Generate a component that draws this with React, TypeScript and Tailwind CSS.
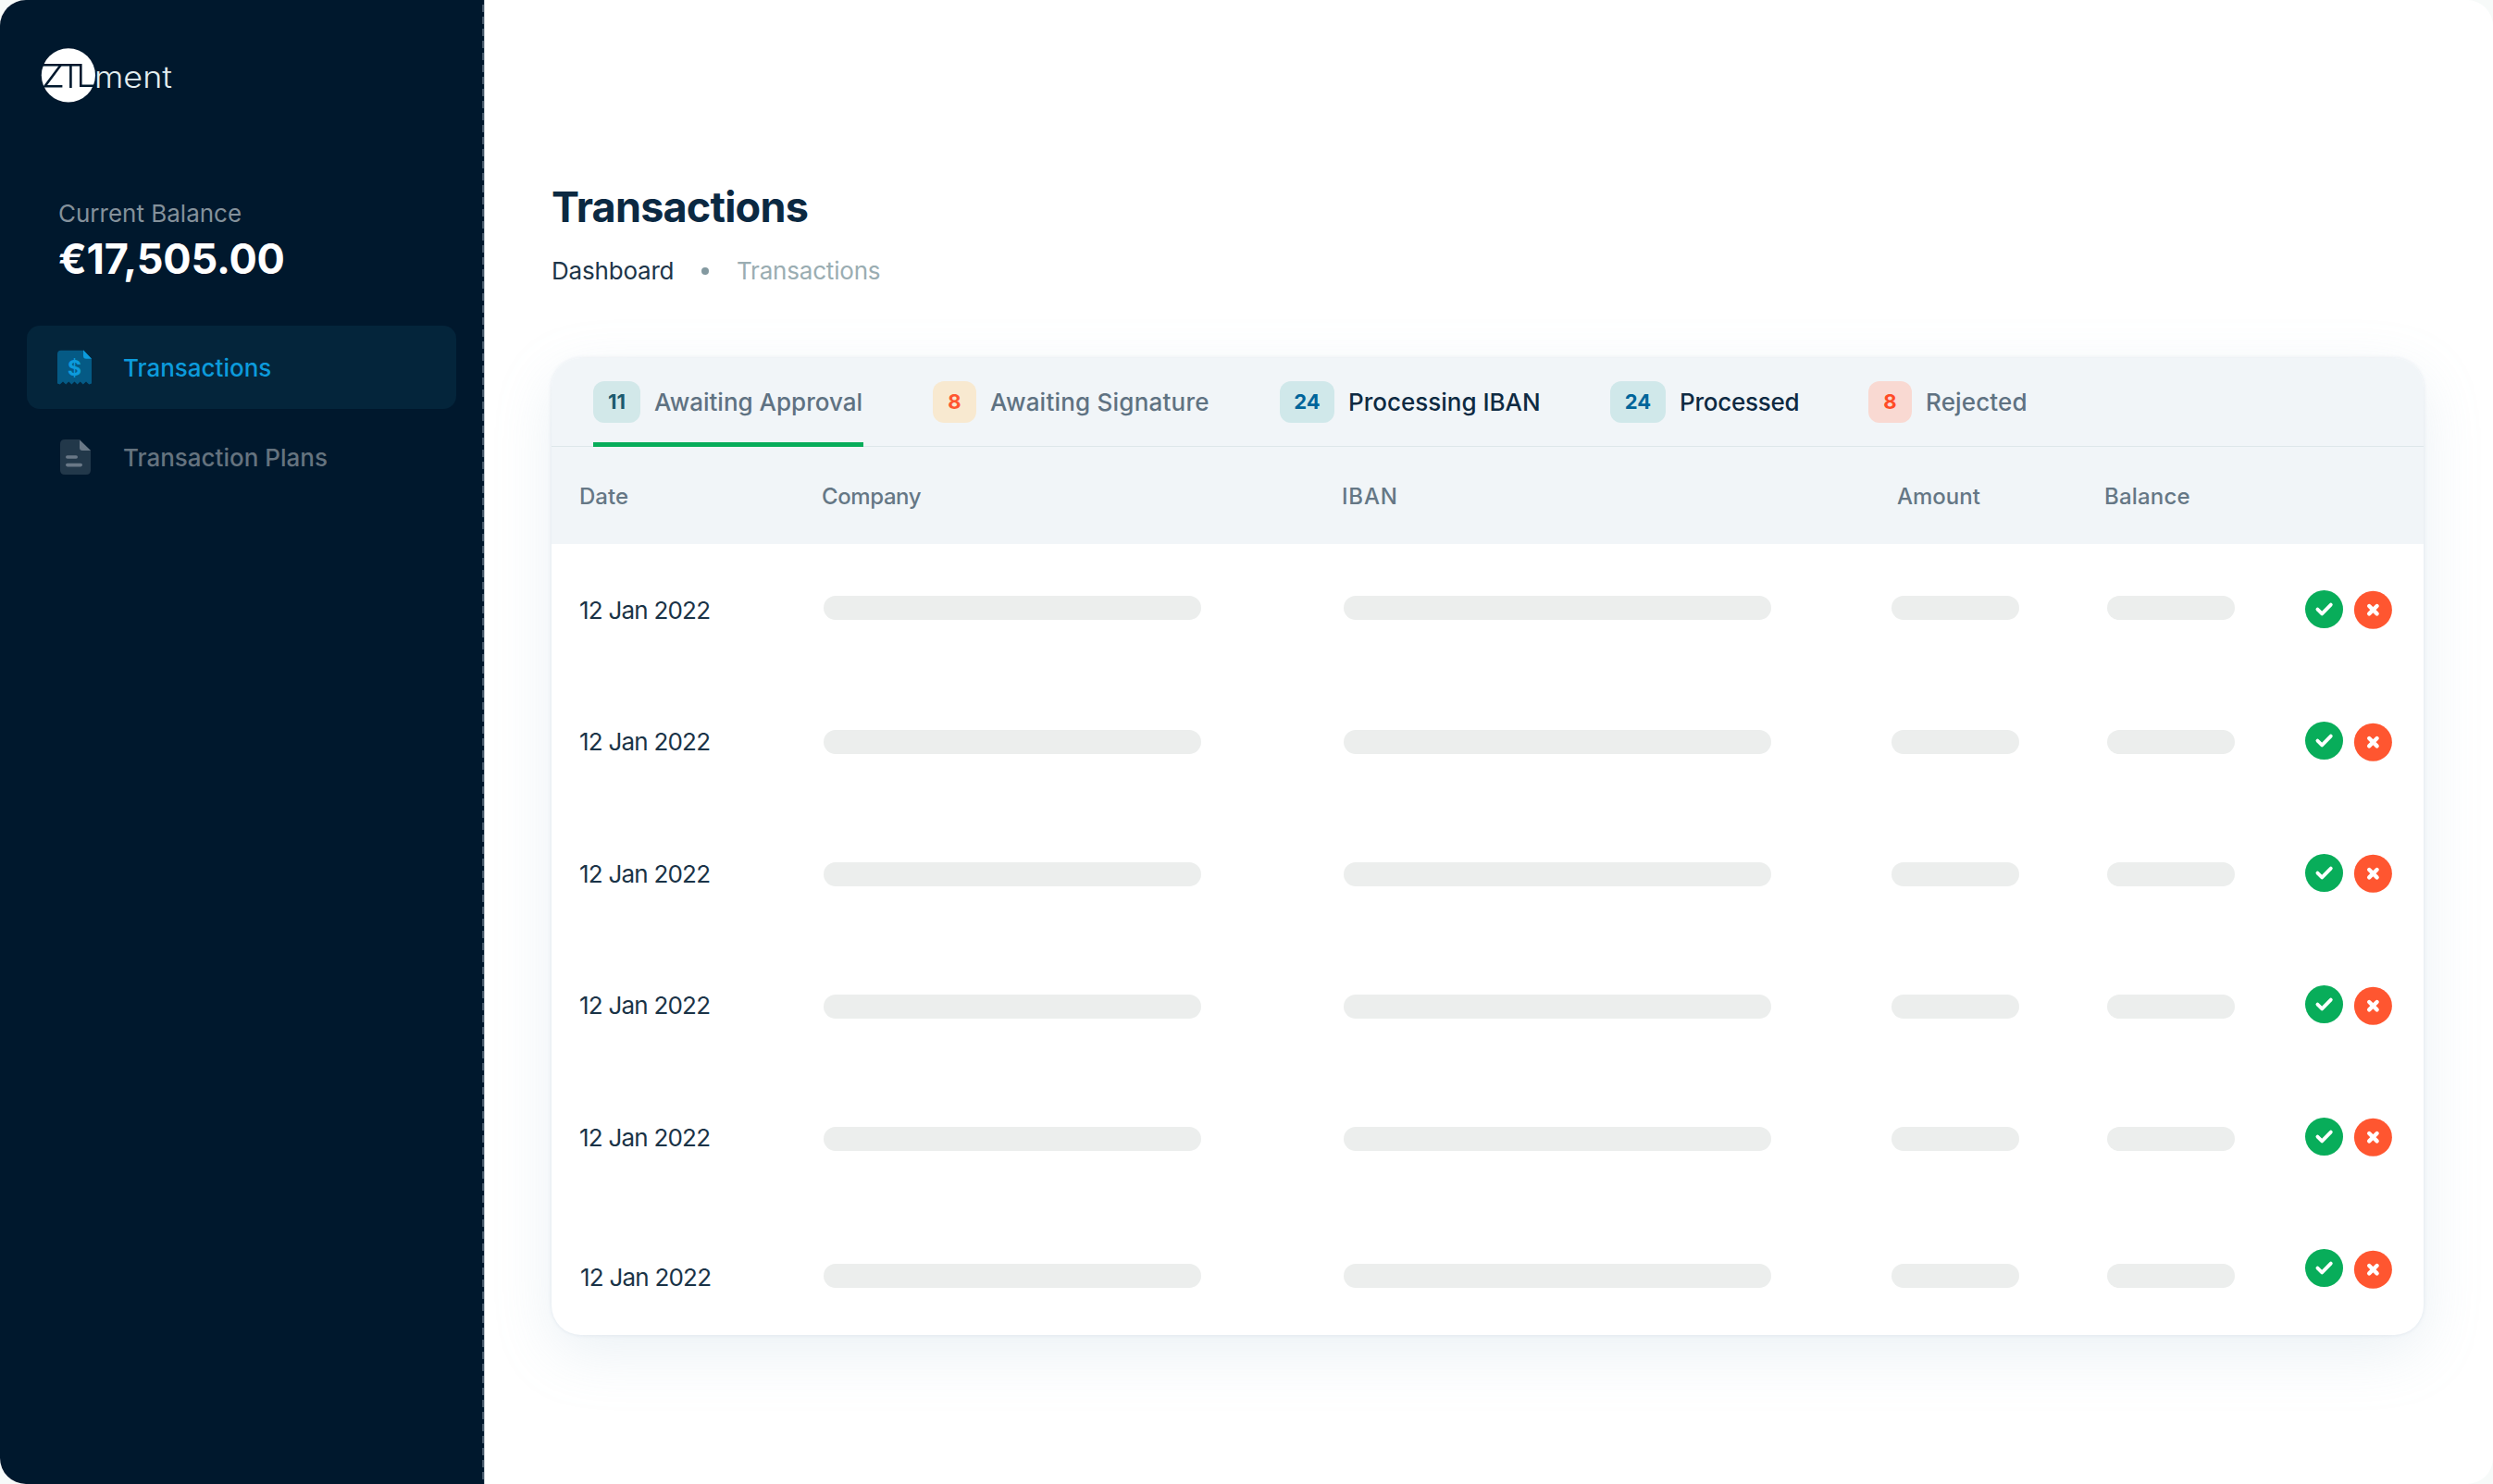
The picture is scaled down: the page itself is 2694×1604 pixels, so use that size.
import React from "react";
import clsx from "clsx";

const tabs = [
  {
    count: 11,
    label: "Awaiting Approval",
    width: "w-[292px]",
    badge: "w-[51px] bg-[#d2e8e9] text-[#1c5a6e]",
    text: "text-[#5f7282]",
    active: true,
  },
  {
    count: 8,
    label: "Awaiting Signature",
    width: "w-[300px]",
    badge: "w-[47px] bg-[#f8e9d0] text-[#ff5630]",
    text: "text-[#5f7282] tracking-[0.22px]",
  },
  {
    count: 24,
    label: "Processing IBAN",
    width: "w-[282px]",
    badge: "w-[59px] bg-[#d0e8ea] text-[#00659a]",
    text: "text-[#0e2a42]",
  },
  {
    count: 24,
    label: "Processed",
    width: "w-[204px]",
    badge: "w-[60px] bg-[#d0e8ea] text-[#00659a]",
    text: "text-[#0e2a42] tracking-[-0.25px]",
  },
  {
    count: 8,
    label: "Rejected",
    width: "w-[180px]",
    badge: "w-[47px] bg-[#f9d9d2] text-[#ff4b26]",
    text: "text-[#5f7282] tracking-[0.15px]",
  },
];

const rows = [
  { date: "12 Jan 2022", dateClass: "", barClass: "pb-[5px]" },
  { date: "12 Jan 2022", dateClass: "", barClass: "" },
  { date: "12 Jan 2022", dateClass: "", barClass: "pt-px" },
  { date: "12 Jan 2022", dateClass: "", barClass: "pt-[2px]" },
  { date: "12 Jan 2022", dateClass: "", barClass: "pt-[3px]" },
  { date: "12 Jan 2022", dateClass: "pt-[18px] pl-px", barClass: "pt-[15px]" },
];

const columns = "grid grid-cols-[262px_562px_594px_229px_218px_1fr] pl-[30px]";

const Logo: React.FC = () => (
  <svg width="150" height="62" viewBox="0 0 150 62" className="ml-[40px]">
    <circle cx="33.9" cy="31.3" r="29.1" fill="#fff" />
    <g fill="none" stroke="#00182d" strokeWidth="2.6">
      <path d="M4 20.2H47.3V42.8H64" />
      <path d="M25.5 20.5L8.5 43.3H27.4" />
      <path d="M36.4 20V45" />
    </g>
    <text
      x="62"
      y="45.2"
      fontSize="32"
      fontWeight="300"
      textLength="84"
      lengthAdjust="spacingAndGlyphs"
      fill="#e3edf0"
      className="font-['Inter',sans-serif]"
    >
      ment
    </text>
  </svg>
);

const InvoiceIcon: React.FC = () => (
  <svg width="37" height="38" viewBox="0 0 37 38">
    <path
      d="M4 .7H28L37 9.7V36.6L34.2 37.5 31 34.6 27.8 37.5 24.7 34.6 21.6 37.5 18.5 34.6 15.4 37.5 12.3 34.6 9.2 37.5 6 34.6 2.8 37.5 0 36.6V4.7Q0 .7 4 .7Z"
      fill="#055a85"
    />
    <path d="M28 .2L37 9.7H31Q28 9.7 28 6.7Z" fill="#0c9bdc" />
    <text
      x="18.6"
      y="27.6"
      fontSize="23"
      fontWeight="700"
      textAnchor="middle"
      fill="#0c9bdc"
      className="font-['Inter',sans-serif]"
    >
      $
    </text>
  </svg>
);

const DocumentIcon: React.FC = () => (
  <svg width="37" height="38" viewBox="0 0 37 38">
    <path
      d="M8 0H24L36 12V33Q36 38 31 38H8Q3 38 3 33V5Q3 0 8 0Z"
      fill="#22384a"
    />
    <path d="M24 .5L36 12H27Q24 12 24 9Z" fill="#697887" />
    <rect x="9" y="17.2" width="13" height="3.6" rx="1.8" fill="#697887" />
    <rect x="9" y="25.8" width="18" height="3.6" rx="1.8" fill="#697887" />
  </svg>
);

const Sidebar: React.FC = () => (
  <aside className="flex w-[524px] shrink-0 bg-[#00182d]">
    <div className="flex-1 pt-[50px]">
      <Logo />
      <div className="mt-[103px] pl-[63px]">
        <p className="text-[26px] leading-8 text-[#84919b]">Current Balance</p>
        <p className="mt-[6px] text-[45px] leading-[54px] font-bold tracking-[-0.2px] text-white">
          €17,505.00
        </p>
      </div>
      <nav className="mt-[45px] ml-[29px] flex w-[464px] flex-col gap-[7px]">
        <div className="flex h-[90px] items-center gap-[34px] rounded-[14px] bg-[#04253b] pl-[33px] text-[26px] font-medium text-[#0c9bdc]">
          <InvoiceIcon />
          <p>Transactions</p>
        </div>
        <div className="flex h-[90px] items-center gap-[34px] rounded-[14px] pl-[33px] text-[26px] font-medium text-[#65737f]">
          <DocumentIcon />
          <p>Transaction Plans</p>
        </div>
      </nav>
    </div>
    <div className="w-[2px] bg-[repeating-linear-gradient(to_bottom,transparent_0_5px,#44586a_5px_13px)]" />
    <div className="w-px bg-[#c3cad0]" />
  </aside>
);

const Bar: React.FC<{ className: string }> = ({ className }) => (
  <div className={clsx("h-[26px] rounded-full bg-[#eceeed]", className)} />
);

const RowActions: React.FC = () => (
  <div className="flex items-center gap-[11px]">
    <svg width="41" height="41" viewBox="0 0 41 41" className="mb-[2px]">
      <circle cx="20.5" cy="20.5" r="20.5" fill="#08ad5a" />
      <path
        d="M13.4 20.6L18.2 25.4L27.8 15.6"
        fill="none"
        stroke="#fff"
        strokeWidth="3.8"
        strokeLinecap="round"
        strokeLinejoin="round"
      />
    </svg>
    <svg width="42" height="42" viewBox="0 0 42 42">
      <circle cx="21.4" cy="21.2" r="20.5" fill="#ff5630" />
      <path
        d="M17.2 17L25.6 25.4M25.6 17L17.2 25.4"
        fill="none"
        stroke="#fff"
        strokeWidth="4.4"
        strokeLinecap="round"
      />
    </svg>
  </div>
);

const TransactionsTable: React.FC = () => (
  <div className="mt-[78px] w-[2023px] overflow-hidden rounded-[32px] bg-white shadow-[0_0_4px_rgba(145,170,195,0.22),0_20px_64px_rgba(145,180,200,0.18)]">
    <div className="flex h-[96px] gap-[75px] border-b border-[#dde7ea] bg-[#f1f5f8] pl-[45px]">
      {tabs.map((tab) => (
        <div
          key={tab.label}
          className={clsx(
            "-mb-px flex flex-col justify-between whitespace-nowrap pt-[25px]",
            tab.width
          )}
        >
          <div className="flex items-center gap-[15px]">
            <span
              className={clsx(
                "flex h-[45px] shrink-0 items-center justify-center rounded-[12px] pb-px text-[22px] font-bold",
                tab.badge
              )}
            >
              {tab.count}
            </span>
            <span className={clsx("text-[26px] font-medium", tab.text)}>
              {tab.label}
            </span>
          </div>
          {tab.active && <div className="h-[5px] bg-[#08ad5a]" />}
        </div>
      ))}
    </div>

    <div
      className={clsx(
        columns,
        "h-[105px] items-center bg-[#f1f5f8] pt-[2px] text-[24px] font-medium text-[#657785]"
      )}
    >
      <p>Date</p>
      <p className="tracking-[-0.4px]">Company</p>
      <p className="tracking-[0.8px]">IBAN</p>
      <p className="pl-[6px]">Amount</p>
      <p className="pl-px tracking-[0.2px]">Balance</p>
    </div>

    {rows.map((row, i) => (
      <div key={i} className={clsx(columns, "h-[142.5px] items-center")}>
        <p
          className={clsx(
            "text-[26px] tracking-[-0.78px] text-[#1a3347]",
            row.dateClass
          )}
        >
          {row.date}
        </p>
        <div className={clsx("pl-[2px]", row.barClass)}>
          <Bar className="w-[408px]" />
        </div>
        <div className={clsx("pl-[2px]", row.barClass)}>
          <Bar className="w-[462px]" />
        </div>
        <div className={row.barClass}>
          <Bar className="w-[138px]" />
        </div>
        <div className={clsx("pl-[4px]", row.barClass)}>
          <Bar className="w-[138px]" />
        </div>
        <RowActions />
      </div>
    ))}
  </div>
);

const App: React.FC = () => {
  return (
    <div className="h-[1604px] w-[2694px] bg-[#f7faf9] font-['Inter',sans-serif]">
      <div className="flex h-full overflow-hidden rounded-[28px] bg-white">
        <Sidebar />
        <main className="flex-1 pt-[196px] pl-[72px]">
          <h1 className="text-[45px] leading-[56px] font-bold tracking-[-0.8px] text-[#0b2942]">
            Transactions
          </h1>
          <div className="mt-[25px] flex items-center text-[26px] leading-8 tracking-[-0.2px]">
            <p className="w-[162px] text-[#1d3549]">Dashboard</p>
            <span className="size-2 rounded-full bg-[#8399a0]" />
            <p className="ml-[30px] text-[#9aadb2]">Transactions</p>
          </div>
          <TransactionsTable />
        </main>
      </div>
    </div>
  );
};

export default App;
